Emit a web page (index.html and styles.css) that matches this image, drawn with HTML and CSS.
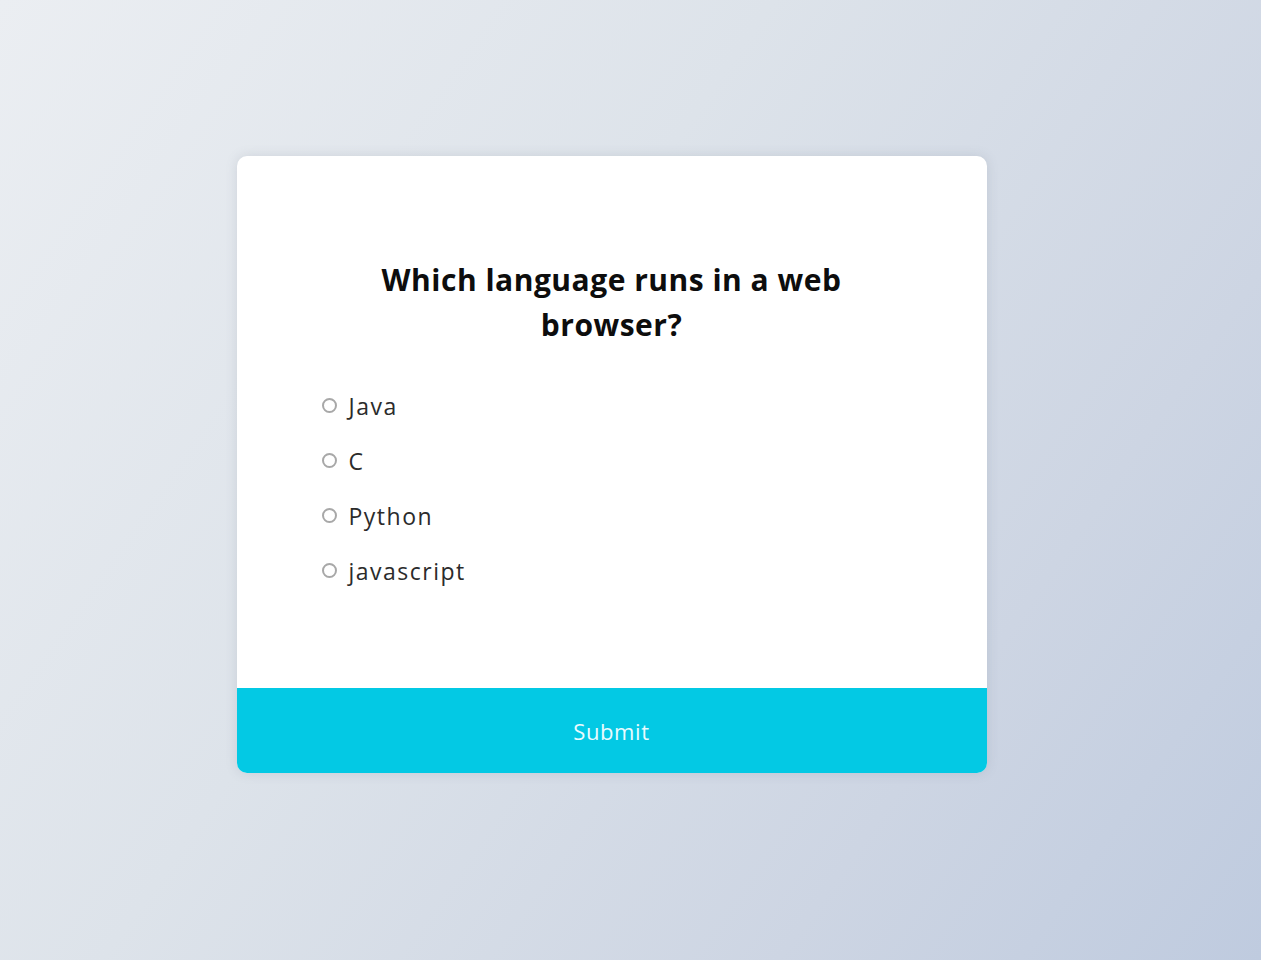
FILE: index.html
```html
<!DOCTYPE html>
<html lang="en">
<head>
<meta charset="utf-8">
<title>Quiz</title>
<link rel="stylesheet" href="styles.css">
</head>
<body>
  <main class="quiz">
    <div class="quiz-header">
      <h2 class="question">Which language runs in a web browser?</h2>
      <ul class="options">
        <li class="option"><span class="radio"></span><span class="label">Java</span></li>
        <li class="option"><span class="radio"></span><span class="label">C</span></li>
        <li class="option"><span class="radio"></span><span class="label">Python</span></li>
        <li class="option"><span class="radio"></span><span class="label">javascript</span></li>
      </ul>
    </div>
    <button class="submit" type="button">Submit</button>
  </main>
</body>
</html>
```
FILE: styles.css
```css
* { box-sizing: border-box; }
html, body { height: 100%; }
body {
  margin: 0;
  font-family: "Open Sans", "Noto Sans", sans-serif;
  background: linear-gradient(125deg, #ebeef2 0%, #dde3ea 40%, #cdd5e3 75%, #bfcbdf 100%);
  display: flex;
  justify-content: center;
  align-items: flex-start;
  padding: 156px 38px 0 0;
}
.quiz {
  width: 750px;
  background: #ffffff;
  border-radius: 10px;
  box-shadow: 0 0 12px rgba(100, 110, 130, 0.18);
  overflow: hidden;
}
.quiz-header {
  padding: 101px 0 90px 0;
}
.question {
  margin: 0 auto;
  width: 540px;
  text-align: center;
  font-size: 30px;
  letter-spacing: 0.5px;
  line-height: 45px;
  font-weight: 700;
  color: #0d0d0d;
}
.options {
  list-style: none;
  margin: 31px 0 0 0;
  padding: 0 0 0 85px;
}
.option {
  display: flex;
  align-items: center;
  height: 55px;
}
.radio {
  width: 15px;
  height: 15px;
  border: 2px solid #a8a8a8;
  border-radius: 50%;
  margin-right: 12px;
  flex: none;
}
.label {
  font-size: 23px;
  letter-spacing: 1.5px;
  color: #2b2b2b;
}
.submit {
  display: block;
  width: 100%;
  height: 85px;
  border: none;
  margin: 0;
  background: #03c9e4;
  color: #e9fbff;
  font-family: inherit;
  font-size: 22px;
  letter-spacing: 0.6px;
  cursor: pointer;
}
```
